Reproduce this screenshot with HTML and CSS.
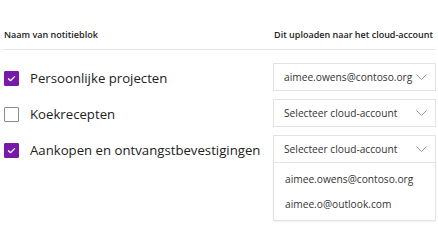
FILE: index.html
```html
<!DOCTYPE html>
<html lang="nl">
<head>
<meta charset="utf-8">
<title>Notitieblokken</title>
<link rel="stylesheet" href="styles.css">
</head>
<body>
<div class="panel">
  <div class="head">
    <span class="head-left">Naam van notitieblok</span>
    <span class="head-right">Dit uploaden naar het cloud-account</span>
  </div>
  <div class="rows">
    <div class="row">
      <label class="nb"><span class="cb checked"><svg viewBox="0 0 15 15"><path d="M4 7.8 L6.3 10 L11 5.3"/></svg></span><span class="nb-name">Persoonlijke projecten</span></label>
      <div class="select"><span class="sel-text">aimee.owens@contoso.org</span><svg class="chev" viewBox="0 0 11 6"><path d="M0.5 0.5 L5.5 5.5 L10.5 0.5"/></svg></div>
    </div>
    <div class="row">
      <label class="nb"><span class="cb"></span><span class="nb-name">Koekrecepten</span></label>
      <div class="select"><span class="sel-text">Selecteer cloud-account</span><svg class="chev" viewBox="0 0 11 6"><path d="M0.5 0.5 L5.5 5.5 L10.5 0.5"/></svg></div>
    </div>
    <div class="row">
      <label class="nb"><span class="cb checked"><svg viewBox="0 0 15 15"><path d="M4 7.8 L6.3 10 L11 5.3"/></svg></span><span class="nb-name">Aankopen en ontvangstbevestigingen</span></label>
      <div class="select open"><span class="sel-text">Selecteer cloud-account</span><svg class="chev" viewBox="0 0 11 6"><path d="M0.5 0.5 L5.5 5.5 L10.5 0.5"/></svg>
        <ul class="menu">
          <li>aimee.owens@contoso.org</li>
          <li>aimee.o@outlook.com</li>
        </ul>
      </div>
    </div>
  </div>
</div>
</body>
</html>
```
FILE: styles.css
```css
html, body {
  margin: 0;
  padding: 0;
  background: #fff;
}
body {
  font-family: "Open Sans", "Noto Sans", sans-serif;
  color: #262626;
  width: 438px;
  height: 250px;
  overflow: hidden;
}
.panel {
  padding-left: 2px;
  padding-right: 2px;
}
.head {
  display: flex;
  justify-content: space-between;
  align-items: flex-end;
  height: 50px;
  box-sizing: border-box;
  padding: 0 3px 8px 2px;
  border-bottom: 1px solid #e6e6e6;
  font-size: 9px;
  font-weight: 600;
  color: #222;
}
.rows {
  padding-top: 9px;
}
.row {
  display: flex;
  align-items: center;
  justify-content: space-between;
  height: 36px;
}
.nb {
  display: flex;
  align-items: center;
  padding-left: 2px;
  padding-top: 2px;
}
.cb {
  width: 15px;
  height: 15px;
  box-sizing: border-box;
  border: 1px solid #8a8a8a;
  border-radius: 1px;
  background: #fff;
  margin-right: 11px;
  display: flex;
}
.cb.checked {
  background: #7719aa;
  border-color: #7719aa;
}
.cb svg {
  width: 13px;
  height: 13px;
}
.cb svg path {
  fill: none;
  stroke: #fff;
  stroke-width: 1.5;
  stroke-linecap: round;
  stroke-linejoin: round;
}
.nb-name {
  font-size: 13.2px;
  color: #222;
}
.select {
  position: relative;
  width: 163px;
  height: 28px;
  box-sizing: border-box;
  border: 1px solid #e3e3e3;
  display: flex;
  align-items: center;
  justify-content: space-between;
  padding: 0 8px 0 10px;
  font-size: 10.2px;
  color: #333;
  background: #fff;
}
.chev {
  width: 11px;
  height: 6px;
}
.chev path {
  fill: none;
  stroke: #9a9a9a;
  stroke-width: 1;
}
.menu {
  position: absolute;
  left: -1px;
  right: -1px;
  top: 26px;
  margin: 0;
  padding: 4px 0 3px;
  list-style: none;
  background: #fff;
  border: 1px solid #e3e3e3;
  box-shadow: 0 1px 2px rgba(0,0,0,0.06);
}
.menu li {
  height: 25px;
  line-height: 25px;
  padding-left: 11px;
  font-size: 10.2px;
  color: #333;
}
```
